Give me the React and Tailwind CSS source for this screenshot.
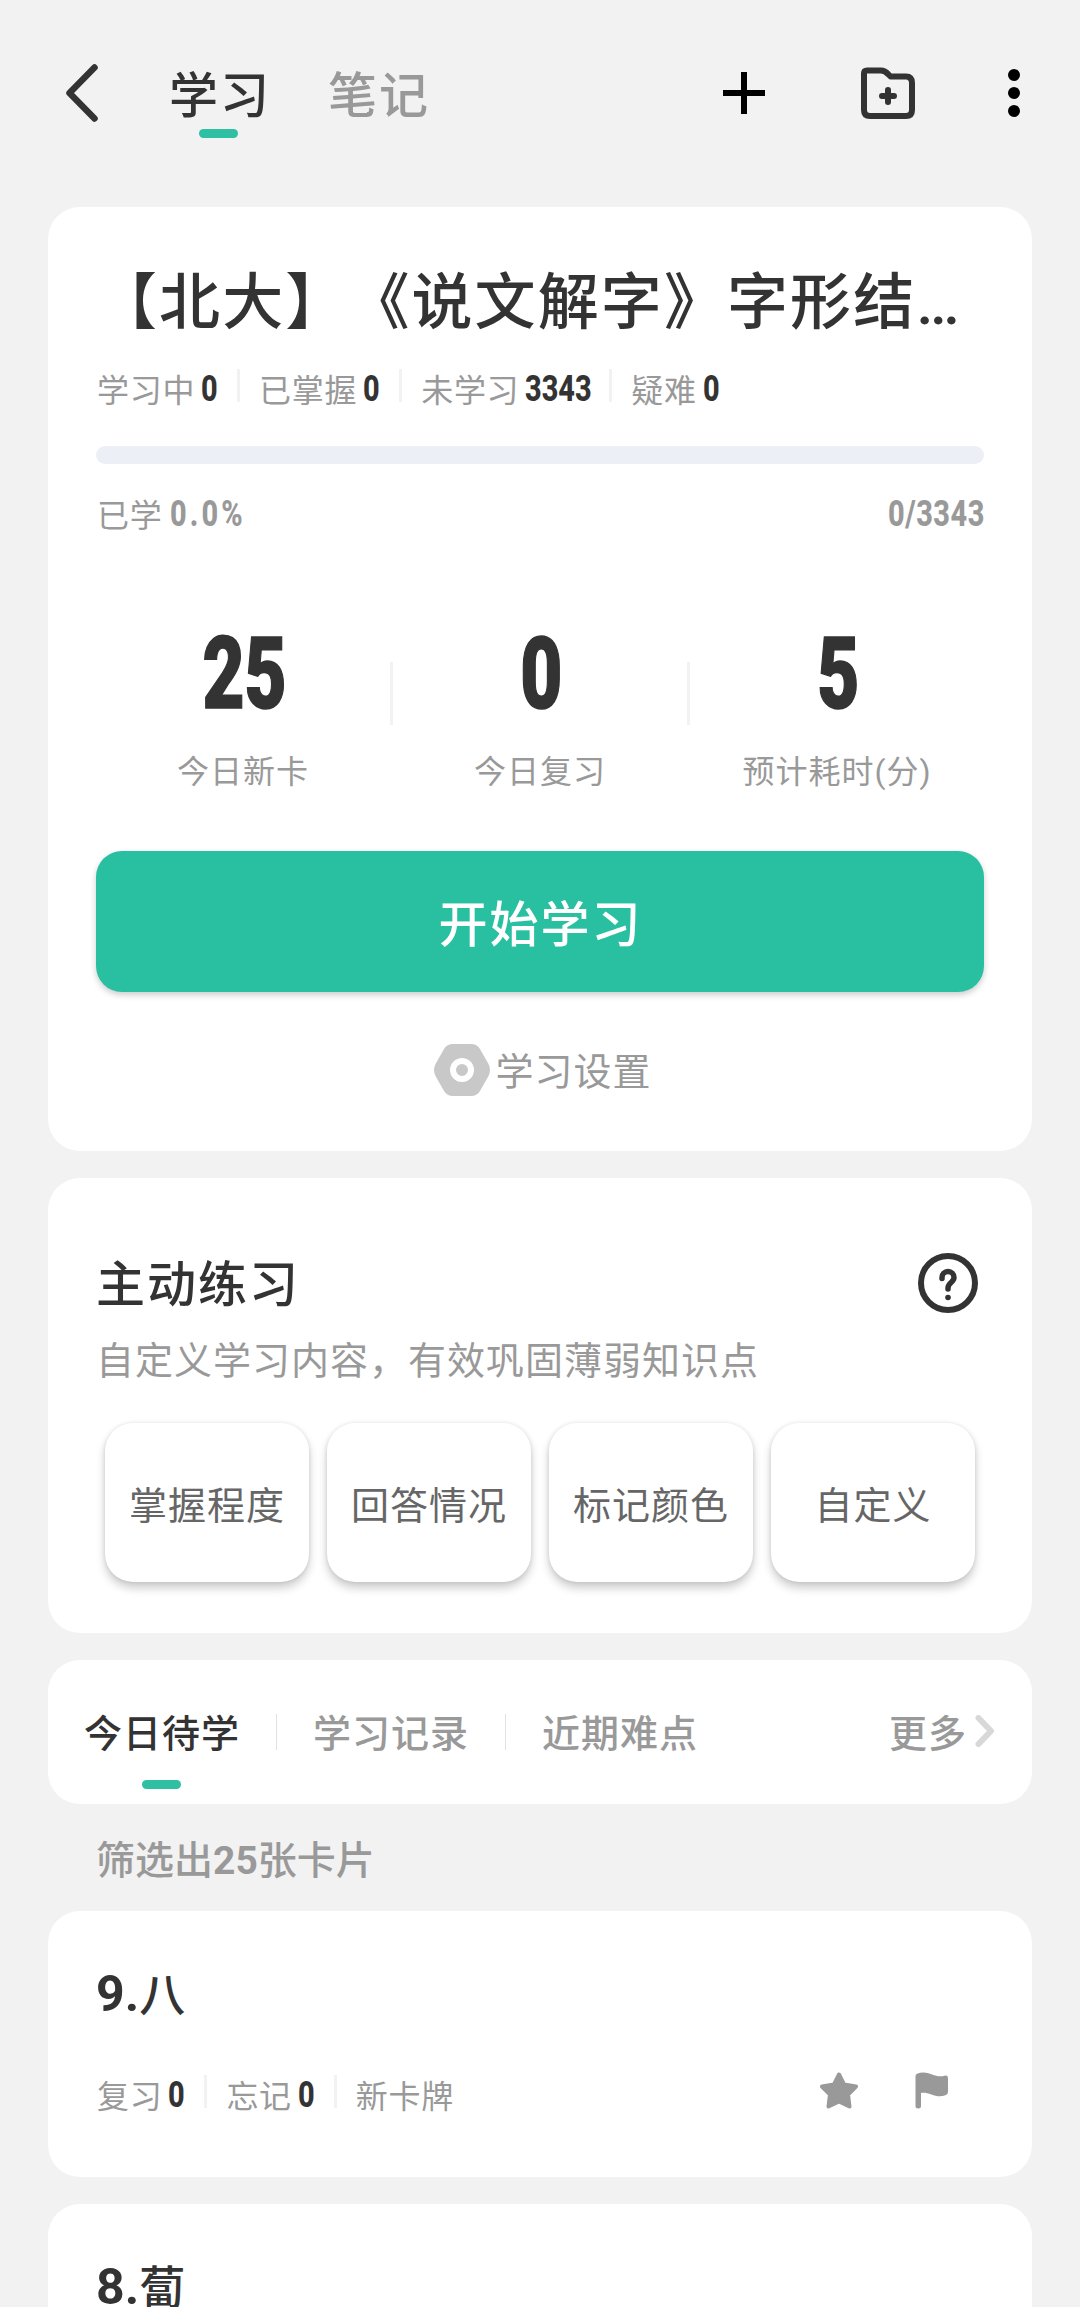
import { useState } from 'react';

const deckStats = [
  { label: '学习中', value: '0', width: 'w-[18px]' },
  { label: '已掌握', value: '0', width: 'w-[18px]' },
  { label: '未学习', value: '3343', width: 'w-[66px]' },
  { label: '疑难', value: '0', width: 'w-[18px]' },
];

const today = [
  { value: '25', label: '今日新卡' },
  { value: '0', label: '今日复习' },
  { value: '5', label: '预计耗时(分)' },
];

const practices = ['掌握程度', '回答情况', '标记颜色', '自定义'];
const listTabs = ['今日待学', '学习记录', '近期难点'];

const cards = [
  { no: 9, char: '八', stats: { review: '0', forget: '0' } },
  { no: 8, char: '蔔' },
];

// condensed digits: the box has the final width, the text inside is squeezed
function Num({ children, className }) {
  return (
    <span className={`flex shrink-0 h-[33px] ${className}`}>
      <span className="origin-left scale-x-[0.78] whitespace-nowrap text-[37px] leading-[31px] font-extrabold">
        {children}
      </span>
    </span>
  );
}

function Divider() {
  return <span className="w-[3px] h-[33px] shrink-0 bg-[#f2f2f2] mx-[18px]" />;
}

function Label({ children }) {
  return (
    <span className="block shrink-0 whitespace-nowrap pl-[1px] text-[32px] tracking-[0.7px] leading-[37px] text-[#999]">
      {children}
    </span>
  );
}

function Header({ tab, setTab }) {
  return (
    <header className="flex items-center h-[186px] pl-[64px] pr-[60px]">
      <svg width="36" height="60" viewBox="0 0 36 60" fill="none" stroke="#333" strokeWidth="6.5" strokeLinecap="round" strokeLinejoin="round">
        <path d="M30.5 4.5 5.5 30l25 25.5" />
      </svg>
      <nav className="flex ml-[69px] gap-[57px]">
        {['学习', '笔记'].map((name) => (
          <button key={name} onClick={() => setTab(name)} className="relative h-[60px]">
            <span className={`block text-[49px] tracking-[2px] leading-[67px] font-medium ${tab === name ? 'text-[#333]' : 'text-[#999]'}`}>
              {name}
            </span>
            {tab === name && (
              <span className="absolute left-[30px] top-[66px] w-[39px] h-[9px] rounded-full bg-[#2fbfa2]" />
            )}
          </button>
        ))}
      </nav>
      <svg className="ml-auto" width="42" height="42" viewBox="0 0 42 42" stroke="#000" strokeWidth="6">
        <path d="M21 0v42M0 21h42" />
      </svg>
      <svg className="ml-[96px]" width="54" height="52" viewBox="0 0 54 52" fill="none" stroke="#333" strokeWidth="6" strokeLinecap="round" strokeLinejoin="round">
        <path d="M3 6.500Q3 3.500 6 3.500H20Q24 3.500 27.500 7.500L29.500 9.500H45Q51 9.500 51 16V43Q51 49 45 49H9Q3 49 3 43Z" />
        <path d="M27 23v12M21 29h12" />
      </svg>
      <svg className="ml-[93px]" width="12" height="48" viewBox="0 0 12 48">
        <circle cx="6" cy="6" r="6" />
        <circle cx="6" cy="24" r="6" />
        <circle cx="6" cy="42" r="6" />
      </svg>
    </header>
  );
}

function DeckCard() {
  return (
    <section className="h-[944px] rounded-[32px] bg-white px-[48px] pt-[54px]">
      <h1 className="h-[78px] whitespace-nowrap text-[61px] tracking-[2.1px] leading-[84px] font-medium text-[#333] [text-spacing-trim:space-all]">
        【北大】《说文解字》字形结…
      </h1>
      <div className="mt-[30px] flex h-[33px] text-[#333]">
        {deckStats.map((s, i) => (
          <div key={s.label} className="flex">
            {i > 0 && <Divider />}
            <span className="mt-[4px] mr-[6px]"><Label>{s.label}</Label></span>
            <Num className={`mt-[4px] ${s.width}`}>{s.value}</Num>
          </div>
        ))}
      </div>
      <div className="mt-[44px] h-[18px] rounded-full bg-[#eceff6]" />
      <div className="mt-[34px] flex h-[33px] justify-between text-[#999]">
        <div className="flex gap-[8px]">
          <Label>已学</Label>
          <Num className="w-[74px] tracking-[4px]">0.0%</Num>
        </div>
        <Num className="w-[96px] tracking-[0.7px]">0/3343</Num>
      </div>

      <div className="mt-[91px] flex h-[169px]">
        {today.map((t, i) => (
          <div key={t.label} className="contents">
            {i > 0 && <span className="mt-[40px] w-[3px] h-[63px] bg-[#f2f2f2]" />}
            <div className="flex flex-1 flex-col items-center">
              <span className="ml-[3px] scale-x-[0.72] text-[101px] leading-[104px] font-black text-[#333] [-webkit-text-stroke:1.5px_#333]">
                {t.value}
              </span>
              <span className="mt-[29px] text-[32px] tracking-[1px] leading-[34px] text-[#999]">{t.label}</span>
            </div>
          </div>
        ))}
      </div>

      <button className="mt-[60px] h-[141px] w-full rounded-[26px] bg-[#29bfa1] pt-[8px] pl-[1px] text-[49px] tracking-[2px] font-medium text-white shadow-[0_3px_6px_rgba(0,0,0,0.2)]">
        开始学习
      </button>
      <div className="mt-[52px] flex h-[52px] items-center justify-center gap-[5px] pl-[6px]">
        <svg width="56" height="52" viewBox="0 0 56 52">
          <path d="M19 0H37Q43 0 46 5L54.500 20Q57.500 26 54.500 32L46 47Q43 52 37 52H19Q13 52 10 47L1.500 32Q-1.500 26 1.500 20L10 5Q13 0 19 0Z" fill="#c8c8c8" />
          <circle cx="28" cy="26" r="9" fill="#c8c8c8" stroke="#fff" strokeWidth="6" />
        </svg>
        <span className="text-[38px] tracking-[1px] leading-[52px] pt-[3px] text-[#999]">学习设置</span>
      </div>
    </section>
  );
}

function PracticeCard() {
  return (
    <section className="mt-[27px] h-[455px] rounded-[32px] bg-white px-[48px] pt-[75px]">
      <div className="flex h-[60px] items-start justify-between pr-[6px]">
        <h2 className="text-[49px] tracking-[2px] leading-[66px] font-medium text-[#333]">主动练习</h2>
        <svg width="60" height="60" viewBox="0 0 60 60" fill="none" stroke="#333" strokeWidth="6" strokeLinecap="round" strokeLinejoin="round">
          <circle cx="30" cy="30" r="27" />
          <path d="M24 25.500v-1a6 6 0 0 1 12 0c0 5-6 5-6 10.500v1" strokeWidth="5.500" />
          <circle cx="30" cy="44.500" r="2.800" fill="#333" stroke="none" />
        </svg>
      </div>
      <p className="mt-[22px] h-[48px] text-[38px] tracking-[1px] leading-[52px] text-[#999]">自定义学习内容，有效巩固薄弱知识点</p>
      <div className="mt-[40px] flex gap-[18px] px-[9px]">
        {practices.map((p) => (
          <button
            key={p}
            className="h-[159px] flex-1 rounded-[28px] bg-white pt-[7px] text-[38px] tracking-[1px] text-[#666] shadow-[0_6px_10px_rgba(0,0,0,0.2),0_0_4px_rgba(0,0,0,0.1)]"
          >
            {p}
          </button>
        ))}
      </div>
    </section>
  );
}

function ListTabs({ active, onChange }) {
  return (
    <section className="mt-[27px] flex h-[144px] items-center rounded-[32px] bg-white pl-[36px] pr-[37px]">
      {listTabs.map((t, i) => (
        <div key={t} className="flex items-center">
          {i > 0 && <span className="mx-[36px] h-[36px] w-px bg-[#e2e2e2]" />}
          <button onClick={() => onChange(t)} className="relative h-[48px]">
            <span className={`block text-[38px] tracking-[1px] leading-[52px] font-medium ${active === t ? 'text-[#333]' : 'text-[#999]'}`}>
              {t}
            </span>
            {active === t && (
              <span className="absolute left-[58px] top-[72px] w-[39px] h-[9px] rounded-full bg-[#2fbfa2]" />
            )}
          </button>
        </div>
      ))}
      <button className="ml-auto flex h-[48px] items-center gap-[8px]">
        <span className="pt-[4px] text-[38px] tracking-[1px] leading-[48px] font-medium text-[#999]">更多</span>
        <svg width="20" height="34" viewBox="0 0 20 34" fill="none" stroke="#d8d8d8" strokeWidth="6" strokeLinecap="round" strokeLinejoin="round">
          <path d="M3.500 3 16 16 3.500 29" />
        </svg>
      </button>
    </section>
  );
}

function CardItem({ card }) {
  return (
    <li className="mb-[27px] h-[266px] rounded-[32px] bg-white px-[48px] pt-[53px]">
      <h3 className="h-[60px] whitespace-nowrap text-[50px] leading-[60px] font-bold text-[#333]">
        {card.no}.<span className="text-[46px] font-medium">{card.char}</span>
      </h3>
      {card.stats && (
        <div className="mt-[51px] flex h-[33px] text-[#333]">
          <span className="mt-[4px] mr-[6px]"><Label>复习</Label></span>
          <Num className="mt-[4px] w-[18px]">{card.stats.review}</Num>
          <Divider />
          <span className="mt-[4px] mr-[6px]"><Label>忘记</Label></span>
          <Num className="mt-[4px] w-[18px]">{card.stats.forget}</Num>
          <Divider />
          <span className="mt-[4px]"><Label>新卡牌</Label></span>
          <div className="ml-auto mt-[-3px] mr-[36px] flex gap-[57px]">
            <svg width="38" height="37" viewBox="0 0 38 37" fill="#999" stroke="#999" strokeWidth="4" strokeLinejoin="round">
              <path d="M19 2.500 24 12.500 36 14.500 28 22.500 29.500 34.500 19 29.500 8.500 34.500 10 22.500 2 14.500 14 12.500Z" />
            </svg>
            <svg width="33" height="37" viewBox="0 0 33 37" fill="#999">
              <path d="M0.500 4Q0.500 2.500 2 1.800C7-0.300 12 0.300 17 2.500C21.500 4.300 25.500 4.800 29.500 3.700Q33 3 33 6V20Q33 22.200 31 23C26 25 21.500 24.500 16.500 22.500C12.500 21 9 20.600 6 21V34Q6 36.500 3.250 36.500Q0.500 36.500 0.500 34Z" />
            </svg>
          </div>
        </div>
      )}
    </li>
  );
}

export default function App() {
  const [tab, setTab] = useState('学习');
  const [listTab, setListTab] = useState('今日待学');

  return (
    <div className="h-[2307px] w-[1080px] overflow-hidden bg-[#f2f2f2] font-[Roboto,'Noto_Sans_CJK_SC',sans-serif]">
      <Header tab={tab} setTab={setTab} />
      <main className="px-[48px] pt-[21px]">
        <DeckCard />
        <PracticeCard />
        <ListTabs active={listTab} onChange={setListTab} />
        <p className="h-[107px] pl-[48px] text-[39px] leading-[114px] font-medium text-[#999]">
          筛选出<span className="font-bold">25</span>张卡片
        </p>
        <ul>
          {cards.map((c) => (
            <CardItem key={c.no} card={c} />
          ))}
        </ul>
      </main>
    </div>
  );
}
